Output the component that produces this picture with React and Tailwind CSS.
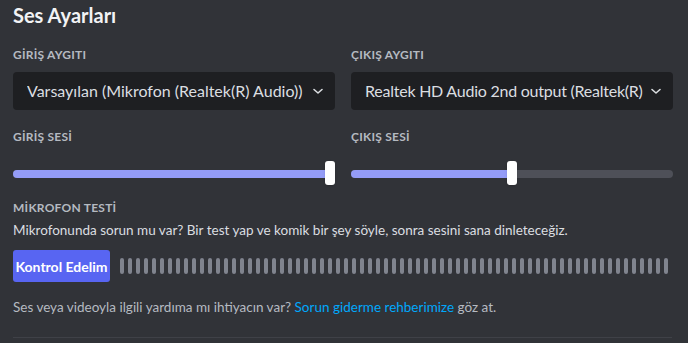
import React from "react";

const FONT = { fontFamily: "Lato, 'Noto Sans', 'Liberation Sans', sans-serif" };

function Chevron() {
  return (
    <svg width="12" height="12" viewBox="0 0 12 12" className="shrink-0">
      <path d="M2 4.5 L6 8 L10 4.5" fill="none" stroke="#dbdee1" strokeWidth="1.6" strokeLinecap="round" strokeLinejoin="round" />
    </svg>
  );
}

function Label({ children }) {
  return (
    <div className="text-[12px] leading-4 font-bold text-[#b5bac1] tracking-[0.02em]">
      {children}
    </div>
  );
}

function Select({ value, tight }) {
  return (
    <div className="mt-[9px] h-[38px] rounded bg-[#1e1f22] flex items-center pl-[14px] pr-[11px] gap-[5px]">
      <span
        className={
          "flex-1 overflow-hidden whitespace-nowrap text-[16px] text-[#dbdee1] " +
          (tight ? "tracking-[-0.015em]" : "")
        }
      >
        {value}
      </span>
      <Chevron />
    </div>
  );
}

function Slider({ pct }) {
  return (
    <div className="relative mt-4 h-6">
      <div className="absolute left-0 right-0 top-[9px] h-2 rounded-full bg-[#4e5058]" />
      <div className="absolute left-0 top-[9px] h-2 rounded-full bg-[#949cf7]" style={{ width: `${pct}%` }} />
      <div
        className="absolute top-0 h-6 w-[10px] rounded-[3px] bg-white shadow"
        style={{ left: `calc(${pct}% - 5px)` }}
      />
    </div>
  );
}

export default function App() {
  const bars = Array.from({ length: 69 });
  return (
    <div className="w-[688px] h-[343px] bg-[#313338] overflow-hidden" style={FONT}>
      <div className="pl-[13px] w-[673px]">
        <h2 className="pt-[3px] text-[20px] leading-6 font-bold text-[#f2f3f5]">Ses Ayarları</h2>

        <div className="mt-5 grid grid-cols-2 gap-4">
          <div>
            <Label>GİRİŞ AYGITI</Label>
            <Select value="Varsayılan (Mikrofon (Realtek(R) Audio))" />
          </div>
          <div>
            <Label>ÇIKIŞ AYGITI</Label>
            <Select value="Realtek HD Audio 2nd output (Realtek(R)" tight />
          </div>
        </div>

        <div className="mt-[19px] grid grid-cols-2 gap-4">
          <div>
            <Label>GİRİŞ SESİ</Label>
            <div className="pr-[5px]">
              <Slider pct={100} />
            </div>
          </div>
          <div>
            <Label>ÇIKIŞ SESİ</Label>
            <Slider pct={50} />
          </div>
        </div>

        <div className="mt-[15px]">
          <Label>MİKROFON TESTİ</Label>
          <p className="mt-1 text-[13.5px] leading-5 text-[#dbdee1]">
            Mikrofonunda sorun mu var? Bir test yap ve komik bir şey söyle, sonra sesini sana dinleteceğiz.
          </p>
          <div className="mt-[10px] flex items-center gap-[10px]">
            <button className="h-8 w-[97px] shrink-0 whitespace-nowrap rounded-[3px] bg-[#5865f2] text-white text-[14px] font-bold">
              Kontrol Edelim
            </button>
            <div className="flex gap-1">
              {bars.map((_, i) => (
                <div key={i} className="w-1 h-4 rounded-full bg-[#80848e]" />
              ))}
            </div>
          </div>
          <p className="mt-[15px] text-[13.5px] leading-5 text-[#b5bac1]">
            Ses veya videoyla ilgili yardıma mı ihtiyacın var?{" "}
            <span className="text-[#00a8fc]">Sorun giderme rehberimize</span> göz at.
          </p>
        </div>

        <div className="mt-5 h-px bg-[#3f4147] w-[659px]" />
      </div>
    </div>
  );
}
